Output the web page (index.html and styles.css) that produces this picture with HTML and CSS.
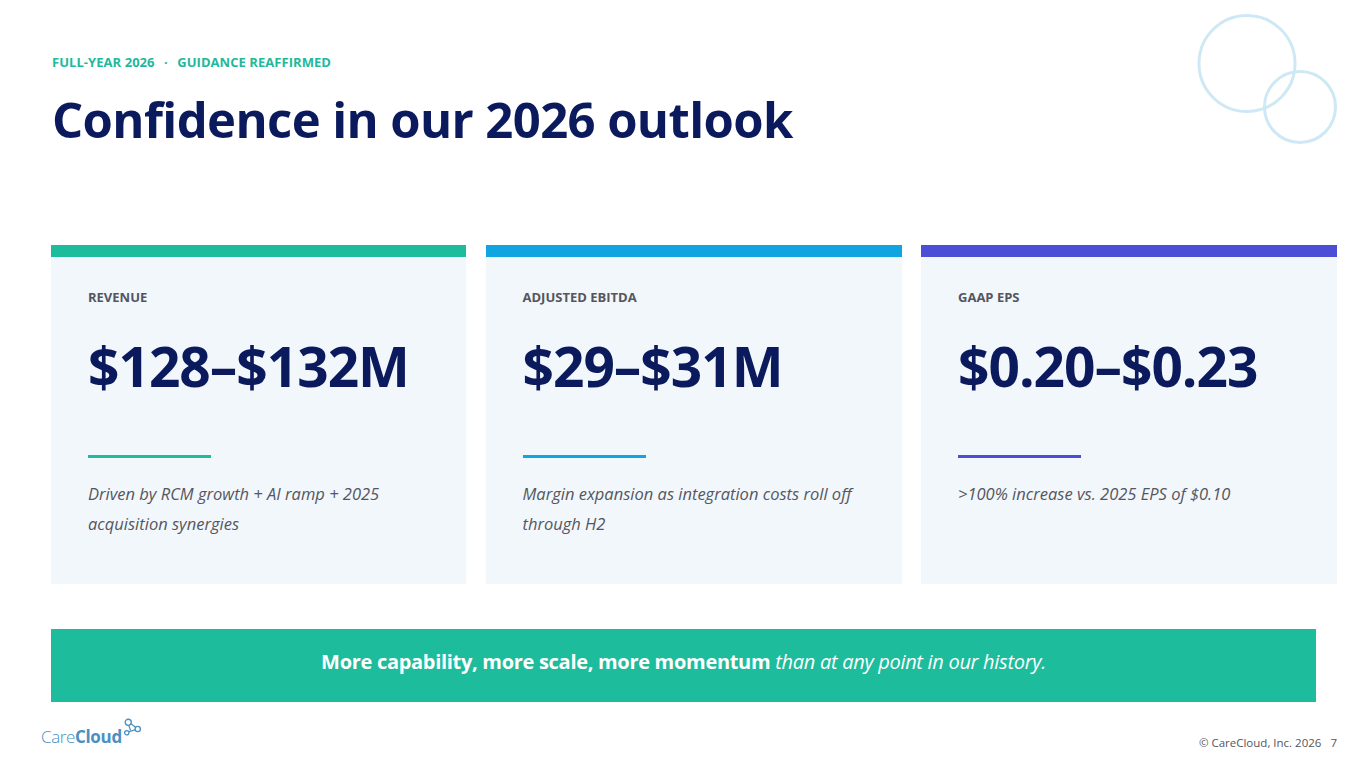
FILE: index.html
```html
<!DOCTYPE html>
<html lang="en">
<head>
<meta charset="utf-8">
<title>Confidence in our 2026 outlook</title>
<link rel="stylesheet" href="styles.css">
</head>
<body>
<div class="slide">
  <svg class="rings" width="160" height="150" viewBox="0 0 160 150" aria-hidden="true">
    <circle cx="67" cy="63.5" r="48" fill="none" stroke="#cfe8f5" stroke-width="3"/>
    <circle cx="120" cy="107" r="35.5" fill="none" stroke="#cfe8f5" stroke-width="3"/>
  </svg>

  <header class="head">
    <div class="eyebrow">FULL-YEAR 2026 <span class="dot">·</span> GUIDANCE REAFFIRMED</div>
    <h1 class="title">Confidence in our 2026 outlook</h1>
  </header>

  <section class="cards">
    <article class="card card-teal">
      <div class="card-label">REVENUE</div>
      <div class="card-value">$128–$132M</div>
      <div class="card-rule"></div>
      <p class="card-desc">Driven by RCM growth + AI ramp + 2025 acquisition synergies</p>
    </article>
    <article class="card card-blue">
      <div class="card-label">ADJUSTED EBITDA</div>
      <div class="card-value">$29–$31M</div>
      <div class="card-rule"></div>
      <p class="card-desc">Margin expansion as integration costs roll off through H2</p>
    </article>
    <article class="card card-indigo">
      <div class="card-label">GAAP EPS</div>
      <div class="card-value">$0.20–$0.23</div>
      <div class="card-rule"></div>
      <p class="card-desc">&gt;100% increase vs. 2025 EPS of $0.10</p>
    </article>
  </section>

  <div class="banner">
    <span class="banner-strong">More capability, more scale, more momentum</span> <em class="banner-em">than at any point in our history.</em>
  </div>

  <footer class="foot">
    <div class="logo">
      <span class="logo-care">Care</span><span class="logo-cloud">Cloud</span>
      <svg class="logo-mark" width="19" height="21" viewBox="0 0 20 22" aria-hidden="true">
        <line x1="5" y1="5" x2="8" y2="13" stroke="#4a90c2" stroke-width="1.3"/>
        <line x1="7" y1="5" x2="15" y2="11" stroke="#4a90c2" stroke-width="1.3"/>
        <line x1="4" y1="15" x2="14" y2="12" stroke="#4a90c2" stroke-width="1.3"/>
        <circle cx="5.5" cy="4.5" r="3.2" fill="#fff" stroke="#4a90c2" stroke-width="1.4"/>
        <circle cx="15.5" cy="11.5" r="2.8" fill="#fff" stroke="#4a90c2" stroke-width="1.4"/>
        <circle cx="4" cy="15.5" r="2.3" fill="#fff" stroke="#4a90c2" stroke-width="1.3"/>
      </svg>
    </div>
    <div class="copy">© CareCloud, Inc. 2026 <span class="page">7</span></div>
  </footer>
</div>
</body>
</html>
```

FILE: styles.css
```css
* { box-sizing: border-box; }

html, body {
  margin: 0;
  padding: 0;
  background: #ffffff;
}

body {
  font-family: "Open Sans", "Noto Sans", "Liberation Sans", sans-serif;
  color: #0b1a5c;
}

.slide {
  position: relative;
  width: 1365px;
  height: 767px;
  overflow: hidden;
  padding: 0 28px 0 51px;
  display: flex;
  flex-direction: column;
}

.rings {
  position: absolute;
  top: 0;
  left: 1180px;
}

.head {
  padding-top: 53px;
  padding-left: 1px;
}

.eyebrow {
  font-size: 13px;
  font-weight: 700;
  color: #22b89a;
  letter-spacing: 0.05px;
  line-height: 18px;
}

.eyebrow .dot {
  margin: 0 6px;
}

.title {
  margin: 18px 0 0 0;
  font-size: 49px;
  font-weight: 700;
  letter-spacing: -0.6px;
  line-height: 60px;
  color: #0b1a5c;
}

.cards {
  margin-top: 96px;
  display: grid;
  grid-template-columns: 415px 416px 416px;
  column-gap: 19.5px;
  height: 339px;
}

.card {
  background: #f2f7fc;
  border-top: 12px solid #1dbc9c;
  padding: 31px 30px 0 37px;
  display: flex;
  flex-direction: column;
}

.card-teal { border-top-color: #1dbc9c; }
.card-blue { border-top-color: #10a5e0; }
.card-indigo { border-top-color: #4c4fd6; }

.card-label {
  font-size: 13px;
  font-weight: 700;
  color: #555560;
  line-height: 18px;
}

.card-value {
  margin-top: 28px;
  font-size: 55px;
  font-weight: 700;
  letter-spacing: -1px;
  line-height: 64px;
  color: #0b1a5c;
}

.card-rule {
  margin-top: 57px;
  width: 123px;
  height: 3px;
  background: #1dbc9c;
}

.card-blue .card-rule { background: #10a5e0; }
.card-indigo .card-rule { background: #4c4fd6; }

.card-desc {
  margin: 21px 0 0 0;
  font-size: 16.5px;
  font-style: italic;
  line-height: 30px;
  color: #55565f;
}

.banner {
  margin-top: 45px;
  width: 1265px;
  height: 73px;
  padding-bottom: 8px;
  background: #1dbc9c;
  color: #ffffff;
  display: flex;
  align-items: center;
  justify-content: center;
  gap: 5px;
  font-size: 20px;
  letter-spacing: -0.3px;
}

.banner-strong { font-weight: 700; }
.banner-em { font-style: italic; font-weight: 400; }

.foot {
  margin-top: 14px;
  margin-left: -10px;
  display: flex;
  justify-content: space-between;
  align-items: flex-end;
}

.logo {
  display: flex;
  align-items: flex-start;
  color: #4a90c2;
  font-size: 17px;
  line-height: 26px;
  padding-top: 8px;
}

.logo-care {
  font-weight: 300;
  letter-spacing: -0.4px;
}

.logo-cloud {
  font-weight: 700;
  letter-spacing: -0.3px;
}

.logo-mark {
  margin-left: 1px;
  margin-top: -6px;
}

.copy {
  font-size: 11.5px;
  color: #555560;
  padding-bottom: 0;
}

.copy .page {
  margin-left: 6px;
}
```
